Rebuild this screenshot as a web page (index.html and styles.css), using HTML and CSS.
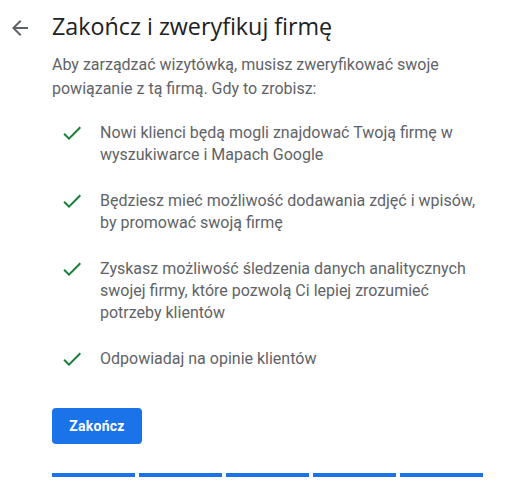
FILE: index.html
```html
<!DOCTYPE html>
<html lang="pl">
<head>
<meta charset="utf-8">
<link rel="stylesheet" href="styles.css">
</head>
<body>
<div class="page">
  <header class="header">
    <button class="back" aria-label="Wstecz">
      <svg width="24" height="24" viewBox="0 0 24 24"><path d="M20 11H7.83l5.59-5.59L12 4l-8 8 8 8 1.41-1.41L7.83 13H20v-2z" fill="#5f6368"/></svg>
    </button>
    <h1 class="title">Zakończ i zweryfikuj firmę</h1>
  </header>
  <main class="content">
    <p class="intro">Aby zarządzać wizytówką, musisz zweryfikować swoje powiązanie z tą firmą. Gdy to zrobisz:</p>
    <ul class="benefits">
      <li class="benefit">
        <svg class="check" width="24" height="24" viewBox="0 0 24 24"><path d="M9 16.17L4.83 12l-1.42 1.41L9 19 21 7l-1.41-1.41z" fill="#188038"/></svg>
        <span>Nowi klienci będą mogli znajdować Twoją firmę w wyszukiwarce i Mapach Google</span>
      </li>
      <li class="benefit">
        <svg class="check" width="24" height="24" viewBox="0 0 24 24"><path d="M9 16.17L4.83 12l-1.42 1.41L9 19 21 7l-1.41-1.41z" fill="#188038"/></svg>
        <span>Będziesz mieć możliwość dodawania zdjęć i wpisów, by promować swoją firmę</span>
      </li>
      <li class="benefit">
        <svg class="check" width="24" height="24" viewBox="0 0 24 24"><path d="M9 16.17L4.83 12l-1.42 1.41L9 19 21 7l-1.41-1.41z" fill="#188038"/></svg>
        <span>Zyskasz możliwość śledzenia danych analitycznych swojej firmy, które pozwolą Ci lepiej zrozumieć potrzeby klientów</span>
      </li>
      <li class="benefit">
        <svg class="check" width="24" height="24" viewBox="0 0 24 24"><path d="M9 16.17L4.83 12l-1.42 1.41L9 19 21 7l-1.41-1.41z" fill="#188038"/></svg>
        <span>Odpowiadaj na opinie klientów</span>
      </li>
    </ul>
    <button class="primary">Zakończ</button>
    <div class="progress">
      <span class="seg"></span><span class="seg"></span><span class="seg"></span><span class="seg"></span><span class="seg"></span>
    </div>
  </main>
</div>
</body>
</html>
```

FILE: styles.css
```css
* { box-sizing: border-box; }
html, body { margin: 0; padding: 0; background: #fff; }
body { font-family: Roboto, "Noto Sans", Arial, sans-serif; color: #5f6368; }

.page { width: 514px; padding: 10px 0 0 8px; }

.header { display: flex; align-items: center; gap: 20px; height: 32px; }
.back {
  width: 24px; height: 24px; padding: 0; margin: 4px 0 0; border: 0; background: none;
  display: flex; align-items: center; justify-content: center;
}
.title {
  margin: 0; font-family: "Open Sans", Roboto, sans-serif; font-weight: 400;
  font-size: 23.3px; line-height: 32px; color: #202124;
}

.content { margin-left: 44px; width: 431px; }

.intro { margin: 11px 0 21px; font-size: 16px; line-height: 24px; }

.benefits { list-style: none; margin: 0; padding: 0; display: flex; flex-direction: column; gap: 24px; }
.benefit { display: flex; align-items: flex-start; gap: 16px; padding-left: 8px; font-size: 16px; line-height: 22px; }
.check { flex: none; margin-top: -1px; }

.primary {
  display: block; margin-top: 37px; height: 36px; width: 90px; padding: 0;
  border: 0; border-radius: 4px; background: #1a73e8; color: #fff;
  font-family: Roboto, sans-serif; font-weight: 700; font-size: 14px; letter-spacing: 0.25px;
}

.progress { display: flex; gap: 4px; margin-top: 29px; }
.seg { width: 83px; height: 4px; background: #1a73e8; }
```
